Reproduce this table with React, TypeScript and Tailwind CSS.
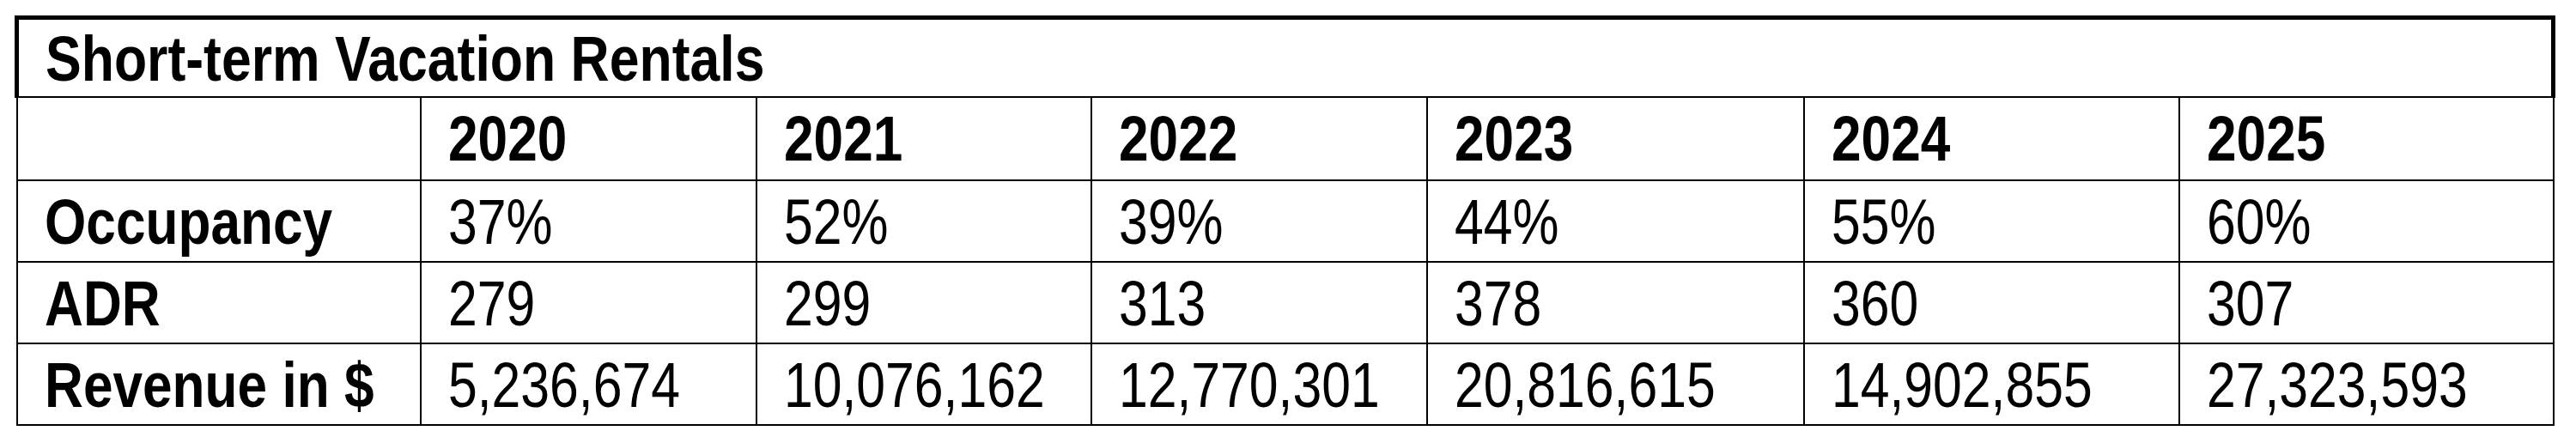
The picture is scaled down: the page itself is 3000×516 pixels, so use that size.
import React from 'react';

const years = ['2020', '2021', '2022', '2023', '2024', '2025'];

const rows: { label: string; values: string[] }[] = [
    { label: 'Occupancy', values: ['37%', '52%', '39%', '44%', '55%', '60%'] },
    { label: 'ADR', values: ['279', '299', '313', '378', '360', '307'] },
    {
        label: 'Revenue in $',
        values: ['5,236,674', '10,076,162', '12,770,301', '20,816,615', '14,902,855', '27,323,593'],
    },
];

const colWidths = ['w-[470px]', 'w-[391px]', 'w-[390px]', 'w-[391px]', 'w-[439px]', 'w-[437px]', 'w-[436px]'];

// No Arial Narrow in the sandbox: squeeze Liberation Sans to the same width
const Narrow: React.FC<{ children: React.ReactNode }> = ({ children }) => (
    <span className="inline-block origin-left scale-x-[0.82] whitespace-nowrap">{children}</span>
);

const NarrowBold: React.FC<{ children: React.ReactNode }> = ({ children }) => (
    <span className="inline-block origin-left scale-x-[0.84] whitespace-nowrap font-bold">{children}</span>
);

const App: React.FC = () => {
    return (
        <div className="w-[3000px] h-[516px] bg-white text-black font-['Liberation_Sans_Narrow','Arial_Narrow','Liberation_Sans',sans-serif] text-[74px] leading-none">
            <div className="pl-[17px] pt-[18px]">
                <table className="table-fixed border-collapse w-[2956px]">
                    <colgroup>
                        {colWidths.map((w, i) => (
                            <col key={i} className={w} />
                        ))}
                    </colgroup>
                    <tbody>
                        {/* Title row, heavier frame */}
                        <tr className="h-[92px]">
                            <td colSpan={7} className="border-[5px] border-b-2 border-black align-top pl-[31px] pt-[9px]">
                                <span className="inline-block origin-left scale-x-[0.845] whitespace-nowrap font-bold">
                                    Short-term Vacation Rentals
                                </span>
                            </td>
                        </tr>

                        {/* Year header */}
                        <tr className="h-[97px]">
                            <td className="border-2 border-black" />
                            {years.map((y) => (
                                <td key={y} className="border-2 border-black align-top pl-[31px] pt-[11px]">
                                    <NarrowBold>{y}</NarrowBold>
                                </td>
                            ))}
                        </tr>

                        {rows.map((row) => (
                            <tr key={row.label} className="h-[95px]">
                                <td className="border-2 border-black align-top pl-[31px] pt-[11px]">
                                    <NarrowBold>{row.label}</NarrowBold>
                                </td>
                                {row.values.map((v, i) => (
                                    <td key={i} className="border-2 border-black align-top pl-[31px] pt-[11px]">
                                        <Narrow>{v}</Narrow>
                                    </td>
                                ))}
                            </tr>
                        ))}
                    </tbody>
                </table>
            </div>
        </div>
    );
};

export default App;
